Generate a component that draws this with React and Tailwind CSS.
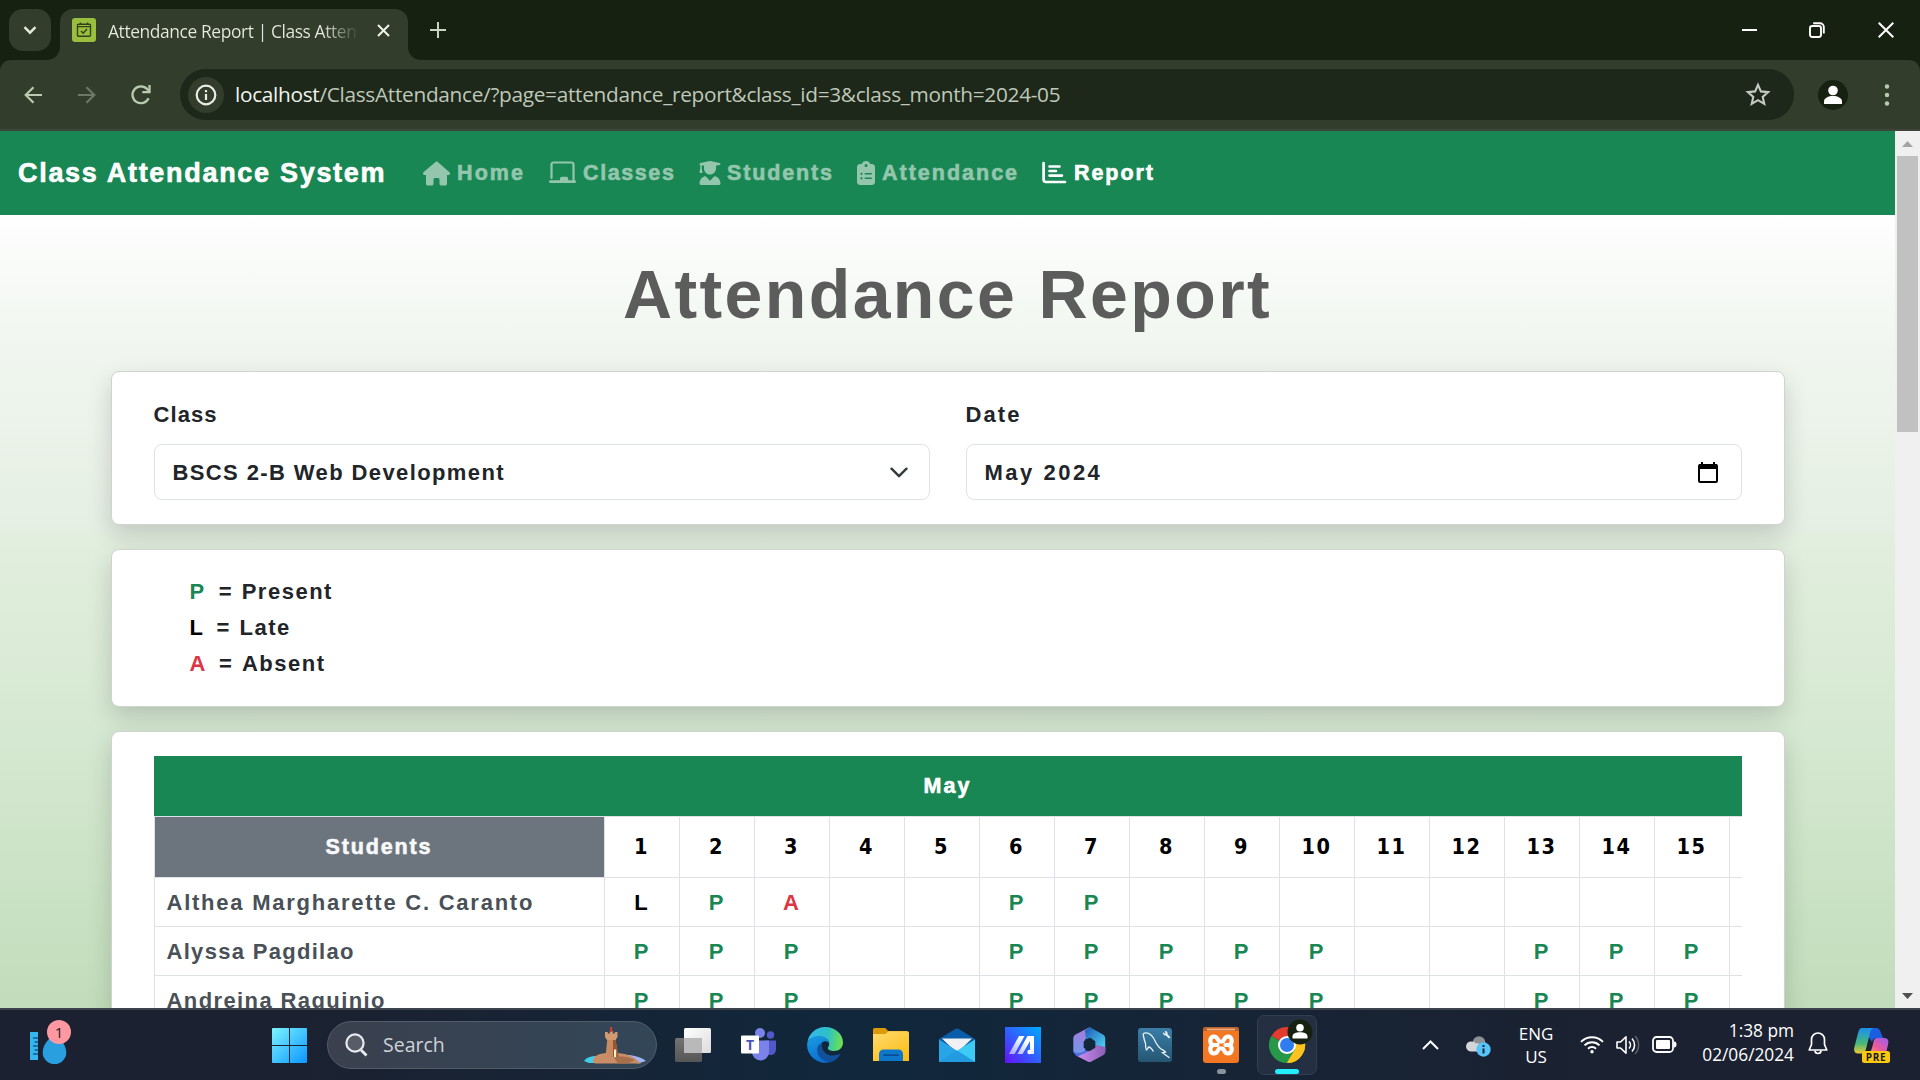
import { FaHouse, FaUserGraduate, FaClipboardList } from "react-icons/fa6";

const DAYS = Array.from({ length: 16 }, (_, i) => i + 1);
const LAST_VISIBLE_DAY = 15;

const STUDENTS = [
  { name: "Althea Margharette C. Caranto", marks: "LPA  PP        ", track: "tracking-[1.76px]" },
  { name: "Alyssa Pagdilao", marks: "PPP  PPPPP  PPP", track: "tracking-[1.3px]" },
  { name: "Andreina Raguinio", marks: "PPP  PPPPP  PPP", track: "tracking-[1.4px]" },
];

const MARK_COLOR = { P: "text-[#198754]", L: "text-black", A: "text-[#dc3545]" };

const LEGEND = [
  { mark: "P", label: "Present", eq: "ml-[13px]" },
  { mark: "L", label: "Late", eq: "ml-[12px]" },
  { mark: "A", label: "Absent", eq: "ml-[12px]" },
];

const ClassesIcon = () => (
  <svg width="27" height="24" viewBox="0 0 27 24" fill="none">
    <path d="M2.5 17V3.5a2 2 0 0 1 2-2h18a2 2 0 0 1 2 2V19" stroke="currentColor" strokeWidth="2.2" strokeLinecap="round" />
    <path d="M1.4 19.3h9.6v-1.8a1.8 1.8 0 0 1 1.8-1.8h4.6a1.8 1.8 0 0 1 1.8 1.8v1.8h6.4a1.4 1.4 0 0 1 0 2.8H1.4a1.4 1.4 0 0 1 0-2.8z" fill="currentColor" />
  </svg>
);

const ReportIcon = () => (
  <svg width="25" height="24" viewBox="0 0 25 24" fill="none" stroke="currentColor" strokeWidth="2.7" strokeLinecap="round">
    <path d="M1.6 2v16.6a2.4 2.4 0 0 0 2.4 2.4h19" />
    <path d="M7.5 5.5h10M7.5 10h6.500M7.500 14.6h12.500" strokeWidth="2.6" />
  </svg>
);

const NAV = [
  { label: "Home", icon: <FaHouse size={27} />, item: "w-[126px]", box: "w-[34px]", track: "tracking-[2.1px]" },
  { label: "Classes", icon: <ClassesIcon />, item: "w-[149px]", box: "w-[34px]", track: "tracking-[1.6px]" },
  { label: "Students", icon: <FaUserGraduate size={24} />, item: "w-[156px]", box: "w-[29px]", track: "tracking-[1.86px]" },
  { label: "Attendance", icon: <FaClipboardList size={24} />, item: "w-[188px]", box: "w-[28px]", track: "tracking-[2px]" },
  { label: "Report", icon: <ReportIcon />, item: "w-[120px]", box: "w-[32px]", track: "tracking-[1.94px]", active: true },
];

function TabStrip() {
  return (
    <div className="flex h-[60px] bg-[#172112] text-white">
      <div className="ml-[9px] mt-[9px] flex h-[42px] w-[42px] items-center justify-center rounded-[14px] bg-[#333d2c]">
        <svg width="14" height="9" viewBox="0 0 14 9" fill="none" stroke="#e3e8dc" strokeWidth="2.4">
          <path d="M1.5 1.2 7 6.7l5.500-5.500" />
        </svg>
      </div>
      <div className="relative ml-[9px] mt-[9px] flex h-[51px] w-[348px] items-start rounded-t-[13px] bg-[#333d2c] pt-[9px]">
        <svg className="absolute bottom-0 -left-[13px]" width="13" height="13">
          <path d="M13 0v13H0A13 13 0 0 0 13 0z" fill="#333d2c" />
        </svg>
        <svg className="absolute bottom-0 -right-[13px]" width="13" height="13">
          <path d="M0 0v13h13A13 13 0 0 1 0 0z" fill="#333d2c" />
        </svg>
        <div className="ml-[12px] flex h-6 w-6 items-center justify-center rounded-[3px] bg-[#9abe3e]">
          <svg width="16" height="16" viewBox="0 0 16 16" fill="none" stroke="#33421a" strokeWidth="1.4">
            <rect x="1.500" y="2.200" width="13" height="12" rx="1" />
            <path d="M1.500 4.600h13M4.500.5v2.500M11.500.5v2.500M5 9l2.200 2.200L11 7" />
          </svg>
        </div>
        <div className="ml-[12px] w-[252px] overflow-hidden bg-linear-to-r from-[#e6ebe0] from-85% to-[#333d2c] to-100% bg-clip-text font-['Open_Sans'] text-[17.4px] leading-[26px] tracking-[-0.4px] whitespace-nowrap text-transparent">
          Attendance Report | Class Atten
        </div>
        <svg className="mt-[6px] ml-[17px]" width="13" height="13" viewBox="0 0 13 13" stroke="#eef2ea" strokeWidth="2">
          <path d="M1 1l11 11M12 1 1 12" />
        </svg>
      </div>
      <svg className="mt-[22px] ml-[22px]" width="16" height="16" viewBox="0 0 16 16" stroke="#c9d6bf" strokeWidth="2">
        <path d="M8 0v16M0 8h16" />
      </svg>
      <div className="ml-auto flex h-[59px] items-center">
        <div className="flex w-[68px] justify-center"><div className="h-[2px] w-[15px] bg-white" /></div>
        <div className="flex w-[68px] justify-center">
          <svg width="16" height="16" viewBox="0 0 16 16" fill="none" stroke="#fff" strokeWidth="1.900">
            <rect x="1" y="4" width="11" height="11" rx="2.200" />
            <path d="M4.200 1.200H11A3.800 3.800 0 0 1 14.800 5v6.600" />
          </svg>
        </div>
        <div className="flex w-[69px] justify-center">
          <svg width="16" height="16" viewBox="0 0 16 16" stroke="#fff" strokeWidth="2">
            <path d="M.7.7l14.600 14.600M15.300.7.7 15.300" />
          </svg>
        </div>
      </div>
    </div>
  );
}

function Toolbar() {
  return (
    <div className="bg-[#172112]">
      <div className="flex h-[71px] items-center rounded-t-[11px] border-b-2 border-[#40453c] bg-[#333d2c]">
        <svg className="ml-[24px]" width="18" height="18" viewBox="0 0 18 18" fill="none" stroke="#b9cbae" strokeWidth="2.200">
          <path d="M18 9H2M9.500 1.200 1.700 9l7.800 7.800" />
        </svg>
        <svg className="ml-[36px]" width="18" height="18" viewBox="0 0 18 18" fill="none" stroke="#6d7965" strokeWidth="2.200">
          <path d="M0 9h16M8.500 1.200 16.300 9l-7.800 7.800" />
        </svg>
        <svg className="ml-[34px]" width="22" height="22" viewBox="0 0 22 22" fill="none" stroke="#b9cbae" strokeWidth="2.300">
          <path d="M18.600 14.200A8.400 8.400 0 1 1 17.300 5.300L19 7" />
          <path d="M19.500 1v7.200h-7.200" />
        </svg>
        <div className="ml-[28px] flex h-[51px] w-[1614px] items-center rounded-full bg-[#1d271a]">
          <div className="ml-[8px] flex h-9 w-9 items-center justify-center rounded-full bg-[#333d2c]">
            <svg width="22" height="22" viewBox="0 0 22 22" fill="none" stroke="#e9ede5" strokeWidth="2.200">
              <circle cx="11" cy="11" r="9.300" />
              <path d="M11 10v6M11 6v2.200" />
            </svg>
          </div>
          <div className="ml-[11px] font-['Open_Sans'] text-[20.8px] leading-[27px] tracking-[-0.3px] whitespace-nowrap text-[#bfc7b8]">
            <span className="text-[#f1f4ee]">localhost</span>/ClassAttendance/?page=attendance_report&amp;class_id=3&amp;class_month=2024-05
          </div>
          <svg className="mr-[23px] ml-auto" width="26" height="25" viewBox="0 0 26 25" fill="none" stroke="#c5c9c1" strokeWidth="2.100">
            <path d="M13 2.800l2.900 6.600 7.200.7-5.400 4.800 1.600 7L13 18.200l-6.300 3.700 1.600-7L2.900 10.100l7.200-.7z" />
          </svg>
        </div>
        <svg className="ml-[24px]" width="30" height="30" viewBox="0 0 30 30">
          <circle cx="15" cy="15" r="15" fill="#172112" />
          <circle cx="15" cy="10.500" r="4.800" fill="#fff" />
          <path d="M6 24v-2.500c0-3.600 4.500-5.500 9-5.500s9 1.900 9 5.500V24z" fill="#fff" />
        </svg>
        <svg className="ml-[36px]" width="6" height="22" viewBox="0 0 6 22" fill="#b9cbae">
          <circle cx="3" cy="2.500" r="2.200" /><circle cx="3" cy="11" r="2.200" /><circle cx="3" cy="19.500" r="2.200" />
        </svg>
      </div>
    </div>
  );
}

function NavBar() {
  return (
    <nav className="flex h-[84px] shrink-0 items-center bg-[#198754] font-bold whitespace-nowrap [-webkit-text-stroke:0.6px]">
      <div className="ml-[18px] w-[405px] pt-px text-[27px] tracking-[1.7px] text-white">Class Attendance System</div>
      {NAV.map((n) => (
        <div key={n.label} className={`flex items-center text-[21.5px] ${n.item} ${n.track} ${n.active ? "text-white" : "text-[#94c6ad]"}`}>
          <span className={`flex shrink-0 ${n.box}`}>{n.icon}</span>
          <span className="pt-px">{n.label}</span>
        </div>
      ))}
    </nav>
  );
}

function Card({ className, children }) {
  return (
    <section className={`w-[1674px] rounded-[8px] border border-[#d0d4cf] bg-white shadow-[0_10px_25px_rgba(0,0,0,0.16)] ${className}`}>
      {children}
    </section>
  );
}

function Filters() {
  return (
    <Card className="flex gap-[36px] px-[42px] pt-[26px] pb-[24px]">
      <div className="w-[776px]">
        <div className="mb-[13px] leading-[33px] tracking-[1.1px]">Class</div>
        <div className="flex h-[56px] items-center justify-between rounded-[8px] border border-[#dee2e6] pr-[21px] pl-[18px]">
          <span className="tracking-[1.39px]">BSCS 2-B Web Development</span>
          <svg width="18" height="11" viewBox="0 0 18 11" fill="none" stroke="#343a40" strokeWidth="2.400" strokeLinecap="round" strokeLinejoin="round">
            <path d="M1.500 1.700 9 9.200l7.500-7.500" />
          </svg>
        </div>
      </div>
      <div className="w-[776px]">
        <div className="mb-[13px] leading-[33px] tracking-[2.1px]">Date</div>
        <div className="flex h-[56px] items-center justify-between rounded-[8px] border border-[#dee2e6] pr-[23px] pl-[18px]">
          <span className="tracking-[2.5px]">May 2024</span>
          <svg width="20" height="21" viewBox="0 0 20 21" fill="none">
            <rect x="1" y="3" width="18" height="17" rx="1" stroke="#000" strokeWidth="2" />
            <path d="M1 2h18v5H1zM3 0h2v3H3zM15 0h2v3h-2z" fill="#000" />
          </svg>
        </div>
      </div>
    </Card>
  );
}

function Legend() {
  return (
    <Card className="mt-[24px] pt-[23px] pb-[25px] pl-[78px]">
      {LEGEND.map((l) => (
        <div key={l.mark} className="flex h-[36px] items-center tracking-[1.5px]">
          <span className={MARK_COLOR[l.mark]}>{l.mark}</span>
          <span className={`w-[23px] ${l.eq}`}>=</span>
          <span>{l.label}</span>
        </div>
      ))}
    </Card>
  );
}

function AttendanceTable() {
  return (
    <Card className="mt-[24px] px-[42px] pt-[24px]">
      <div className="overflow-hidden">
        <div className="flex h-[60px] items-center justify-center bg-[#198754] pt-px text-[21.5px] tracking-[2px] text-white [-webkit-text-stroke:0.6px]">May</div>
        <div className="flex h-[62px] border-y border-l border-[#dee2e6]">
          <div className="flex w-[450px] shrink-0 items-center justify-center border-r border-[#dee2e6] bg-[#6c757d] bg-clip-padding pt-px text-[21.5px] tracking-[1.86px] text-[#f8f9fa] [-webkit-text-stroke:0.6px]">
            Students
          </div>
          {DAYS.map((d) => (
            <div key={d} className="flex w-[75px] shrink-0 items-center justify-center border-r border-[#dee2e6] pt-px font-['DejaVu_Sans_Condensed'] text-[21.500px] tracking-[1.5px] text-black">
              {d <= LAST_VISIBLE_DAY ? d : ""}
            </div>
          ))}
        </div>
        {STUDENTS.map((s) => (
          <div key={s.name} className="flex h-[49px] border-b border-l border-[#dee2e6]">
            <div className={`flex w-[450px] shrink-0 items-center border-r border-[#dee2e6] pl-[12px] whitespace-nowrap text-[#495057] ${s.track}`}>
              {s.name}
            </div>
            {DAYS.map((d, i) => {
              const mark = s.marks[i];
              return (
                <div key={d} className={`flex w-[75px] shrink-0 items-center justify-center border-r border-[#dee2e6] pr-px ${MARK_COLOR[mark] || ""}`}>
                  {mark}
                </div>
              );
            })}
          </div>
        ))}
      </div>
    </Card>
  );
}

function Page() {
  return (
    <div className="flex h-[877px]">
      <main className="flex w-[1895px] flex-col overflow-hidden font-['Liberation_Sans',sans-serif] text-[22px] font-bold text-[#212529]">
        <NavBar />
        <div className="flex h-[793px] flex-col items-center overflow-hidden bg-[linear-gradient(to_bottom,#fefefe_0%,#f0f6ef_17%,#e5efe3_39.500%,#e2eede_41%,#d5e8d1_66%,#c2ddbb_100%)]">
          <h1 className="mt-[39px] mb-[37px] h-[80px] shrink-0 text-[68px] leading-[80px] tracking-[2.400px] text-[#5c5c5c]">Attendance Report</h1>
          <Filters />
          <Legend />
          <AttendanceTable />
        </div>
      </main>
      <div className="flex w-[25px] flex-col items-center bg-[#f0f0f0]">
        <svg className="mt-[10px]" width="11" height="6"><path d="M5.500 0 11 6H0z" fill="#a3a3a3" /></svg>
        <div className="mt-[9px] h-[276px] w-[21px] bg-[#c1c1c1]" />
        <svg className="mt-auto mb-[9px]" width="11" height="6"><path d="M0 0h11L5.500 6z" fill="#505050" /></svg>
      </div>
    </div>
  );
}

const TaskView = () => (
  <svg width="36" height="34" viewBox="0 0 36 34">
    <defs>
      <linearGradient id="tvA" x2="1" y2="1"><stop stopColor="#fff" /><stop offset="1" stopColor="#dcdcdc" /></linearGradient>
      <linearGradient id="tvB" x2="0" y2="1"><stop stopColor="#737373" /><stop offset="1" stopColor="#565656" /></linearGradient>
    </defs>
    <rect y="10" width="27" height="24" rx="1.500" fill="url(#tvB)" />
    <rect x="9" width="27" height="25" rx="1.500" fill="url(#tvA)" />
    <path d="M9 10h18v15H9z" fill="#b9b9b9" />
  </svg>
);

const Teams = () => (
  <svg width="36" height="33" viewBox="0 0 36 33">
    <circle cx="29.500" cy="7" r="3.700" fill="#5059c9" />
    <path d="M24 12.500h11v9a5.500 5.500 0 0 1-11 0z" fill="#5059c9" />
    <circle cx="19" cy="5" r="5" fill="#7b83eb" />
    <path d="M11 12.500h17V24a8.500 8.500 0 0 1-17 0z" fill="#7b83eb" />
    <rect y="7.500" width="18" height="18" rx="1" fill="#fff" />
    <text x="9" y="21.500" textAnchor="middle" className="font-['Open_Sans'] text-[14px] font-bold" fill="#4b53bc">T</text>
  </svg>
);

const Edge = () => (
  <svg width="36" height="36" viewBox="0 0 36 36">
    <defs>
      <linearGradient id="edA" x1="0" y1=".4" x2="1" y2=".5"><stop stopColor="#35b8ef" /><stop offset=".55" stopColor="#2cc0c7" /><stop offset="1" stopColor="#6fe34a" /></linearGradient>
      <linearGradient id="edB" x2=".4" y2="1"><stop stopColor="#1b9de2" /><stop offset="1" stopColor="#0b6fd0" /></linearGradient>
    </defs>
    <path d="M18 0C28.500 0 36 7.200 36 15.500c0 5-3.800 8.500-9 8.500-3.600 0-6.200-1.300-6.200-3 0-1 1.400-1.500 1.400-4.200 0-3.800-4.200-7.300-10-7.300C5.500 9.500 1.200 12.800.4 15.500 1.600 6.500 9 0 18 0z" fill="url(#edA)" />
    <path d="M.2 16.200C1.400 12 6 8.900 12 8.900c6.500 0 10.200 4 10.300 7.600-1-1.800-2.800-2.600-4.500-2.300-3.600.6-6.200 4.800-5 10.200 1.200 5.800 6.400 9.600 11.400 10.400A18 18 0 0 1 .2 16.200z" fill="url(#edB)" />
    <path d="M14.400 16.200c-5 2.200-5.600 8.600-2 13.300 3.600 4.600 8.700 6.300 12.300 5.400 3.600-1.200 6.500-4 8.200-7.200.3-.6-.2-1-.8-.7-7 3.300-14 .7-16.400-4.600-1.200-2.600-1-4.600-.1-6.200z" fill="#11519b" />
  </svg>
);

const Folder = () => (
  <svg width="36" height="33" viewBox="0 0 36 33">
    <defs><linearGradient id="foA" x2=".7" y2="1"><stop stopColor="#ffdb70" /><stop offset="1" stopColor="#fdbe19" /></linearGradient></defs>
    <path d="M0 1.500A1.500 1.500 0 0 1 1.500 0h10.800l2.900 3H34v6H0z" fill="#dc9a08" />
    <path d="M0 6h12.500l3-2.800h19A1.500 1.500 0 0 1 36 4.700V33H0z" fill="url(#foA)" />
    <path d="M6 33v-7a4.500 4.500 0 0 1 4.500-4.500h15A4.500 4.500 0 0 1 30 26v7z" fill="#0d78cb" />
    <path d="M11 27.200h14" stroke="#0a4f91" strokeWidth="1.800" strokeLinecap="round" />
  </svg>
);

const Mail = () => (
  <svg width="36" height="34" viewBox="0 0 36 34">
    <path d="M0 11 16.600.8a3 3 0 0 1 2.800 0L36 11v8H0z" fill="#0a5da8" />
    <path d="M3 10.500h30L18 25z" fill="#f1f1f3" />
    <path d="M36 11.500V34H0z" fill="#3ccbf4" />
    <path d="M0 11.500 36 34H0z" fill="#27a5e6" />
    <path d="M18 22.500 36 34H0z" fill="#229be0" />
  </svg>
);

const MyAsus = () => (
  <svg width="36" height="36" viewBox="0 0 36 36">
    <defs>
      <linearGradient id="maA" x1="0" y1="1" x2="1" y2="0"><stop stopColor="#6610f8" /><stop offset=".5" stopColor="#2f62ff" /><stop offset="1" stopColor="#00aaff" /></linearGradient>
      <linearGradient id="maB" x1="0" y1="1" x2="1" y2="0"><stop stopColor="#fff" stopOpacity=".5" /><stop offset=".7" stopColor="#fff" /></linearGradient>
    </defs>
    <path d="M0 0h36v36H0z" fill="url(#maA)" />
    <path d="M4 27 14 9h5.500L9.500 27zM12.500 27l10-18H29v18h-4V14l-7.500 13z" fill="url(#maB)" />
    <circle cx="24.500" cy="25" r="2.200" fill="#fff" />
  </svg>
);

const M365 = () => (
  <svg width="33" height="35" viewBox="0 0 33 35">
    <defs>
      <linearGradient id="mA" x2="0" y2="1"><stop stopColor="#a77ad8" /><stop offset="1" stopColor="#6f9af0" /></linearGradient>
      <linearGradient id="mB" x2="1" y2="1"><stop stopColor="#1b57b5" /><stop offset="1" stopColor="#52dcf5" /></linearGradient>
      <linearGradient id="mC" x2="1"><stop stopColor="#cf8df0" /><stop offset="1" stopColor="#8b5fb5" /></linearGradient>
    </defs>
    <path d="M17 0 2.500 7.500A4 4 0 0 0 .3 11v14l4 4 8-5V12l5-3z" fill="url(#mA)" />
    <path d="M12 3.500 17 .3 30 7.400a4 4 0 0 1 2.200 3.500v12L21 17l-2-5.500-6 .5z" fill="url(#mB)" />
    <path d="M32.500 20v4.500a4 4 0 0 1-2 3.400L18.500 34.500a4 4 0 0 1-4 0L4 29l12-5.500 5-6z" fill="url(#mC)" />
    <path d="M.3 22c.5 4.500 6 5.500 12 1.500l4 .5L5 29.300C2 28.500.3 26 .3 22z" fill="#4f6fe0" />
    <path d="m16.500 10.800 5.800 3.400v6.600l-5.800 3.400-5.800-3.400v-6.600z" fill="#11273b" />
  </svg>
);

const MySql = () => (
  <svg width="34" height="34" viewBox="0 0 34 34" fill="none">
    <defs><linearGradient id="myA" x2="0" y2="1"><stop stopColor="#3a7ea8" /><stop offset="1" stopColor="#255672" /></linearGradient></defs>
    <rect width="34" height="34" rx="3" fill="url(#myA)" />
    <path d="M5 6c3-2.500 8-.5 10.500 4 2 3.500 3.500 8 7 10.500 2 1.500 4 2 5 3.500l-3 .8 7 5M5 6c1 5 1.500 7 2.500 9.500C8 18 7 20 8.500 22c1-.5 1.500-1.500 2-3 1.500 0 3.500 2 5 4.500" stroke="#e8f1f6" strokeWidth="1.300" />
    <path d="m25 4 2.500 2.300L27 3c2.500 0 2.800 2 2.500 3.200l3 3-1.500 1.300-3-3c-1.800.3-3-.8-3-3.500z" fill="#eef5f8" />
  </svg>
);

const Xampp = () => (
  <svg width="36" height="36" viewBox="0 0 36 36" fill="none">
    <rect width="36" height="36" rx="3" fill="#f37623" />
    <path d="M3 0h30a3 3 0 0 1 3 3v1H0V3a3 3 0 0 1 3-3z" fill="#b9622c" />
    <path d="M4 2.500h28" stroke="#f3ad7e" strokeWidth="1.800" />
    <path d="M14.500 18H10c-4-1.500-3.500-8.500 1-8.500 4.500 0 3.500 5 5.500 5h3c2 0 1-5 5.500-5s5 7 1 8.500h-3.500M10 18c-4 1.500-3.500 8.500 1 8.500 4.500 0 3.500-5 5.500-5h3c2 0 1 5 5.500 5s5-7 1-8.500" stroke="#fff" strokeWidth="4.200" strokeLinejoin="round" strokeLinecap="round" />
  </svg>
);

const Chrome = () => (
  <svg width="50" height="52" viewBox="0 0 50 52">
    <path d="M2.400 21A18 18 0 0 1 33.600 21L18 30z" fill="#e33b2e" />
    <path d="M33.600 21A18 18 0 0 1 18 48l0-18z" fill="#fcc31e" />
    <path d="M18 48A18 18 0 0 1 2.400 21L18 30l8 4.500z" fill="#279847" />
    <path d="M18 21h15.600A18 18 0 0 1 18 48l8-13.500z" fill="#fcc31e" />
    <circle cx="18" cy="30" r="9" fill="#fff" />
    <circle cx="18" cy="30" r="7" fill="#2f7cf0" />
    <circle cx="31" cy="17" r="12.500" fill="#172112" />
    <circle cx="31" cy="12.800" r="3.800" fill="#fff" />
    <path d="M23.500 23.500v-2c0-3 3.700-4.300 7.500-4.300s7.500 1.300 7.500 4.300v2z" fill="#fff" />
  </svg>
);

const Castle = () => (
  <svg width="62" height="37" viewBox="0 0 62 37">
    <path d="M0 34c4-5 9-5 15-5l2 7H5z" fill="#41cfe8" />
    <path d="M40 28c9-.5 17 2 22 6l-8 2.500-12-3z" fill="#a5b4f5" />
    <path d="M9 35c0-6 4-8 13-9h12c10 1 13 3 19 7l4 3.500H11z" fill="#c98e66" />
    <path d="M30 31c8-3 14-1 21 2l-7 3.500H34z" fill="#a86f4c" />
    <path d="M21.500 30 23.500 10h7.500l3.500 20z" fill="#c88a60" />
    <path d="M29 30V10h2l3.500 20z" fill="#94552f" />
    <path d="M21 5h2.800v1.500h2V4h3v2.500h2V5H33.500v5l-2 3H23l-2-3z" fill="#d39a72" />
    <path d="M26 0h2.200v5H26z" fill="#d8392f" />
    <path d="M30 22.500h2.200V30H30z" fill="#fff0c8" />
  </svg>
);

const Weather = () => (
  <svg width="42" height="46" viewBox="0 0 42 46">
    <rect y="12" width="8" height="28" fill="#35b7ee" />
    <path d="M3 18h5M4.500 22h3.500M3 26h5M4.500 30h3.500M3 34h5" stroke="#175a8c" strokeWidth="1.400" />
    <path d="M24.500 10c3 8 11.800 13 11.800 22.500a11.800 11.500 0 0 1-23.600 0C12.700 23 21.500 18 24.500 10z" fill="#2a9fe0" />
    <circle cx="29" cy="12" r="12" fill="#ff98a1" />
    <text x="29" y="17.500" textAnchor="middle" className="font-['Open_Sans'] text-[15px]" fill="#1b1b1b">1</text>
  </svg>
);

const Windows = () => (
  <svg width="35" height="35" viewBox="0 0 35 35">
    <defs><linearGradient id="winA" gradientUnits="userSpaceOnUse" x1="0" y1="0" x2="35" y2="35"><stop stopColor="#7df3ff" /><stop offset="1" stopColor="#0a97ff" /></linearGradient></defs>
    <path d="M1 0h16v17H0V1a1 1 0 0 1 1-1zM18 0h16a1 1 0 0 1 1 1v16H18zM0 18h17v17H1a1 1 0 0 1-1-1zM18 18h17v16a1 1 0 0 1-1 1H18z" fill="url(#winA)" />
  </svg>
);

const Copilot = () => (
  <svg width="36" height="35" viewBox="0 0 36 35">
    <defs>
      <linearGradient id="cpA" x2="0" y2="1"><stop stopColor="#1a8ff0" /><stop offset=".6" stopColor="#46b97c" /><stop offset="1" stopColor="#f0c832" /></linearGradient>
      <linearGradient id="cpB" x1="1" x2="0" y2="1"><stop stopColor="#9b5cf0" /><stop offset=".6" stopColor="#ea5b9d" /><stop offset="1" stopColor="#ff9a5a" /></linearGradient>
    </defs>
    <path d="M9 0h13c3 0 4 2 5 5l2 5h-6c-3 0-4 1-5 4z" fill="#1b5fe0" />
    <path d="M8 0h12c-3 1-3.500 3-4.500 7L12 21c-1 3-2.500 4.500-5 4.500H4c-3 0-4.500-2-3.700-6L4 5C5 1.500 6 0 8 0z" fill="url(#cpA)" />
    <path d="M23 10h7c3.500 0 5 2 4.200 6L32 25H14c2 0 3-2 4-5l1.500-6c.7-3 1.500-4 3.500-4z" fill="url(#cpB)" />
    <rect x="8" y="23" width="28" height="12" rx="2.500" fill="#fdc90f" />
    <text x="22" y="32.600" textAnchor="middle" className="font-['Open_Sans'] text-[10px] font-bold tracking-[0.600px]" fill="#1a1a1a">PRE</text>
  </svg>
);

const APPS = [TaskView, Teams, Edge, Folder, Mail, MyAsus, M365, MySql];

function Taskbar() {
  return (
    <footer className="flex h-[72px] items-center border-t-2 border-[#3d434d] bg-linear-to-r from-[#1b2130] from-15% via-[#10273c] via-45% to-[#1b2130] to-85% font-['Open_Sans'] text-white">
      <div className="mb-[5px] ml-[30px] w-[242px]"><Weather /></div>
      <Windows />
      <div className="ml-[20px] flex h-[48px] w-[330px] items-center rounded-full border border-[#525b68] bg-linear-to-r from-[#3a404e] to-[#324658]">
        <svg className="ml-[17px]" width="23" height="24" viewBox="0 0 23 24" fill="none" stroke="#e8eaed">
          <circle cx="10" cy="10" r="8.600" strokeWidth="2.200" fill="#575d68" />
          <path d="m16 17 5.500 5.500" strokeWidth="2.800" />
        </svg>
        <span className="ml-[15px] text-[19.500px] text-[#cfd3d8]">Search</span>
        <div className="mr-[10px] ml-auto"><Castle /></div>
      </div>
      <div className="ml-[3px] flex h-full items-center">
        {APPS.map((Icon, i) => (
          <div key={i} className="mb-px flex w-[66px] justify-center"><Icon /></div>
        ))}
        <div className="relative mb-px flex w-[66px] justify-center">
          <Xampp />
          <div className="absolute top-[42px] h-[5px] w-[9px] rounded-full bg-[#8b929b]" />
        </div>
        <div className="relative mb-px ml-[3px] flex h-[60px] w-[60px] rounded-[7px] border border-[#313f50] bg-[#243042]">
          <div className="ml-[11px] -mt-px"><Chrome /></div>
          <div className="absolute bottom-0 left-[17px] h-[5px] w-[24px] rounded-full bg-[#22edff]" />
        </div>
      </div>
      <svg className="ml-[105px]" width="17" height="10" viewBox="0 0 17 10" fill="none" stroke="#fff" strokeWidth="2">
        <path d="M1 9l7.500-7.500L16 9" />
      </svg>
      <svg className="mt-[3px] ml-[27px]" width="25" height="21" viewBox="0 0 25 21">
        <circle cx="13" cy="6.500" r="6.300" fill="#8d9094" />
        <path d="M5 5.500a5 5 0 0 1 5 2c3-1 5 1 5 4v4H4.500a4.700 5 0 0 1 .5-10z" fill="#d4d5d8" />
        <circle cx="17.500" cy="13.500" r="7.200" fill="#58c4fa" />
        <path d="M17.500 12.500v5M17.500 9v2" stroke="#12293d" strokeWidth="2" />
      </svg>
      <div className="mb-px ml-[19px] w-[52px] text-center text-[17px] leading-[23px]">ENG<br />US</div>
      <svg className="mb-px ml-[18px]" width="24" height="19" viewBox="0 0 24 19" fill="none" stroke="#fff" strokeWidth="1.900">
        <path d="M1 6.800a15.500 15.500 0 0 1 22 0M4.500 10.400a10.500 10.500 0 0 1 15 0M8 13.700a5.700 5.700 0 0 1 8 0" />
        <circle cx="12" cy="16.700" r="1.700" fill="#fff" stroke="none" />
      </svg>
      <svg className="mb-px ml-[12px]" width="25" height="20" viewBox="0 0 25 20" fill="none" stroke="#fff" strokeWidth="1.600">
        <path d="M1 7h3.500L10 1.800v16.400L4.500 13H1z" strokeLinejoin="round" />
        <path d="M13 6.500a5 5 0 0 1 0 7M16 3.500a9.500 9.500 0 0 1 0 13" />
        <path d="M19 1a13 13 0 0 1 0 18" stroke="#5a616d" />
      </svg>
      <svg className="mb-px ml-[11px]" width="25" height="17" viewBox="0 0 25 17" fill="none">
        <rect x="1" y="1" width="20" height="15" rx="3.500" stroke="#fff" strokeWidth="1.800" />
        <rect x="4" y="4" width="14" height="9" rx="1" fill="#fff" />
        <path d="M22 5.500c2 .3 2.500 1.300 2.500 3s-.5 2.700-2.500 3z" fill="#fff" />
      </svg>
      <div className="mb-[5px] ml-[16px] w-[101px] text-right text-[17.300px] leading-[23.500px] whitespace-nowrap">1:38 pm<br />02/06/2024</div>
      <svg className="mb-[3px] ml-[14px]" width="20" height="23" viewBox="0 0 20 23" fill="none" stroke="#fff" strokeWidth="1.700" strokeLinejoin="round">
        <path d="M10 1a6.500 6.500 0 0 0-6.500 6.500v5L1.200 18h17.600l-2.300-5.500v-5A6.500 6.500 0 0 0 10 1z" />
        <path d="M7 18.500a3 3 0 0 0 6 0" />
      </svg>
      <div className="ml-[26px]"><Copilot /></div>
    </footer>
  );
}

export default function App() {
  return (
    <div className="flex h-[1080px] w-[1920px] flex-col overflow-hidden bg-[#172112]">
      <TabStrip />
      <Toolbar />
      <Page />
      <Taskbar />
    </div>
  );
}
